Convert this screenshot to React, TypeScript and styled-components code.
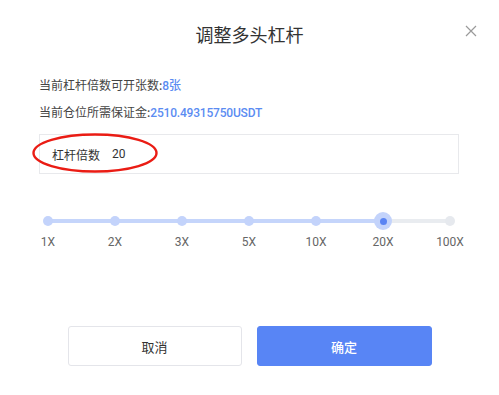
import { createGlobalStyle, styled } from 'styled-components';

const GlobalStyle = createGlobalStyle`
  html, body {
    margin: 0;
    padding: 0;
    background: #ffffff;
  }
  body {
    font-family: 'Noto Sans CJK SC', 'Noto Sans', sans-serif;
    color: #333333;
  }
`;

const Dialog = styled.div`
  position: relative;
  width: 499px;
  height: 395px;
  box-sizing: border-box;
  padding: 24px 40px 0 39px;
  display: flex;
  flex-direction: column;
  background: #fff;
`;

const Title = styled.div`
  text-align: center;
  font-size: 18px;
  line-height: 20px;
  color: #333;
  padding-left: 1px;
`;

const CloseButton = styled.button`
  position: absolute;
  top: 25px;
  right: 22px;
  width: 12px;
  height: 12px;
  padding: 0;
  border: none;
  background: transparent;
  cursor: pointer;
  display: flex;
`;

const Info = styled.div`
  margin-top: 28px;
  display: flex;
  flex-direction: column;
`;

const InfoLine = styled.div`
  font-size: 12px;
  line-height: 25px;
  color: #444;
  white-space: nowrap;
`;

const Value = styled.span`
  color: #5b8cf2;
  font-family: Roboto, 'Noto Sans CJK SC', sans-serif;
  font-weight: 500;
  letter-spacing: -0.2px;
`;

const InputBox = styled.div`
  position: relative;
  margin-top: 8px;
  height: 40px;
  box-sizing: border-box;
  border: 1px solid #e8e9ec;
  display: flex;
  align-items: center;
  padding-left: 12px;
  gap: 12px;
  font-size: 12px;
  color: #333;
`;

const InputValue = styled.span`
  font-family: Roboto, sans-serif;
  font-size: 12px;
`;

const Annotation = styled.svg`
  position: absolute;
  left: -8px;
  top: -2px;
  overflow: visible;
  pointer-events: none;
`;

const SliderWrap = styled.div`
  margin-top: 37px;
  padding: 0 9px 0 9px;
`;

const Track = styled.div`
  position: relative;
  height: 20px;
  display: flex;
  align-items: center;
  justify-content: space-between;
`;

const Rail = styled.div`
  position: absolute;
  left: 0;
  right: 0;
  top: 8px;
  height: 4px;
  border-radius: 2px;
  background: #e9ecf0;
`;

const Fill = styled.div`
  position: absolute;
  left: 0;
  top: 8px;
  height: 4px;
  border-radius: 2px;
  background: #c5d5fb;
`;

const DotSlot = styled.div`
  position: relative;
  width: 0;
  height: 20px;
  display: flex;
  align-items: center;
  justify-content: center;
`;

const Dot = styled.span<{ $active: boolean }>`
  flex: none;
  width: 10px;
  height: 10px;
  border-radius: 50%;
  background: ${(p) => (p.$active ? '#c3d3fb' : '#e6e9ee')};
`;

const Handle = styled.span`
  flex: none;
  width: 18px;
  height: 18px;
  border-radius: 50%;
  background: #c3d3fb;
  display: flex;
  align-items: center;
  justify-content: center;

  &::after {
    content: '';
    width: 7px;
    height: 7px;
    border-radius: 50%;
    background: #5a84f3;
  }
`;

const Marks = styled.div`
  margin-top: 3px;
  display: flex;
  justify-content: space-between;
`;

const Mark = styled.span`
  width: 0;
  display: flex;
  justify-content: center;
  white-space: nowrap;
  font-family: Roboto, sans-serif;
  font-size: 12px;
  line-height: 16px;
  color: #666;
`;

const Actions = styled.div`
  margin-top: auto;
  margin-bottom: 29px;
  display: flex;
  justify-content: center;
  gap: 15px;
  padding-left: 1px;
`;

const Btn = styled.button<{ $primary?: boolean }>`
  width: ${(p) => (p.$primary ? '175px' : '174px')};
  height: 40px;
  border-radius: 3px;
  font-family: 'Noto Sans CJK SC', sans-serif;
  font-size: 13px;
  cursor: pointer;
  border: 1px solid ${(p) => (p.$primary ? '#5885f5' : '#e4e5ea')};
  background: ${(p) => (p.$primary ? '#5885f5' : '#fff')};
  color: ${(p) => (p.$primary ? '#fff' : '#333')};
  font-weight: ${(p) => (p.$primary ? 500 : 400)};
`;

const levels = ['1X', '2X', '3X', '5X', '10X', '20X', '100X'];
const current = 5;

export default function App() {
  const pct = (current / (levels.length - 1)) * 100;
  return (
    <>
      <GlobalStyle />
      <Dialog>
        <Title>调整多头杠杆</Title>
        <CloseButton aria-label="关闭">
          <svg width="12" height="12" viewBox="0 0 12 12">
            <path d="M1 1 L11 11 M11 1 L1 11" stroke="#9a9a9a" strokeWidth="1.2" />
          </svg>
        </CloseButton>
        <Info>
          <InfoLine>
            当前杠杆倍数可开张数:<Value>8张</Value>
          </InfoLine>
          <InfoLine>
            当前仓位所需保证金:<Value>2510.49315750USDT</Value>
          </InfoLine>
        </Info>
        <InputBox>
          <span>杠杆倍数</span>
          <InputValue>20</InputValue>
          <Annotation width="126" height="40" viewBox="0 0 126 40">
            <ellipse cx="63" cy="20" rx="61.5" ry="18.5" fill="none" stroke="#ea1c14" strokeWidth="2.4" />
          </Annotation>
        </InputBox>
        <SliderWrap>
          <Track>
            <Rail />
            <Fill style={{ width: `${pct}%` }} />
            {levels.map((l, i) => (
              <DotSlot key={l}>{i === current ? <Handle /> : <Dot $active={i < current} />}</DotSlot>
            ))}
          </Track>
          <Marks>
            {levels.map((l) => (
              <Mark key={l}>{l}</Mark>
            ))}
          </Marks>
        </SliderWrap>
        <Actions>
          <Btn>取消</Btn>
          <Btn $primary>确定</Btn>
        </Actions>
      </Dialog>
    </>
  );
}
